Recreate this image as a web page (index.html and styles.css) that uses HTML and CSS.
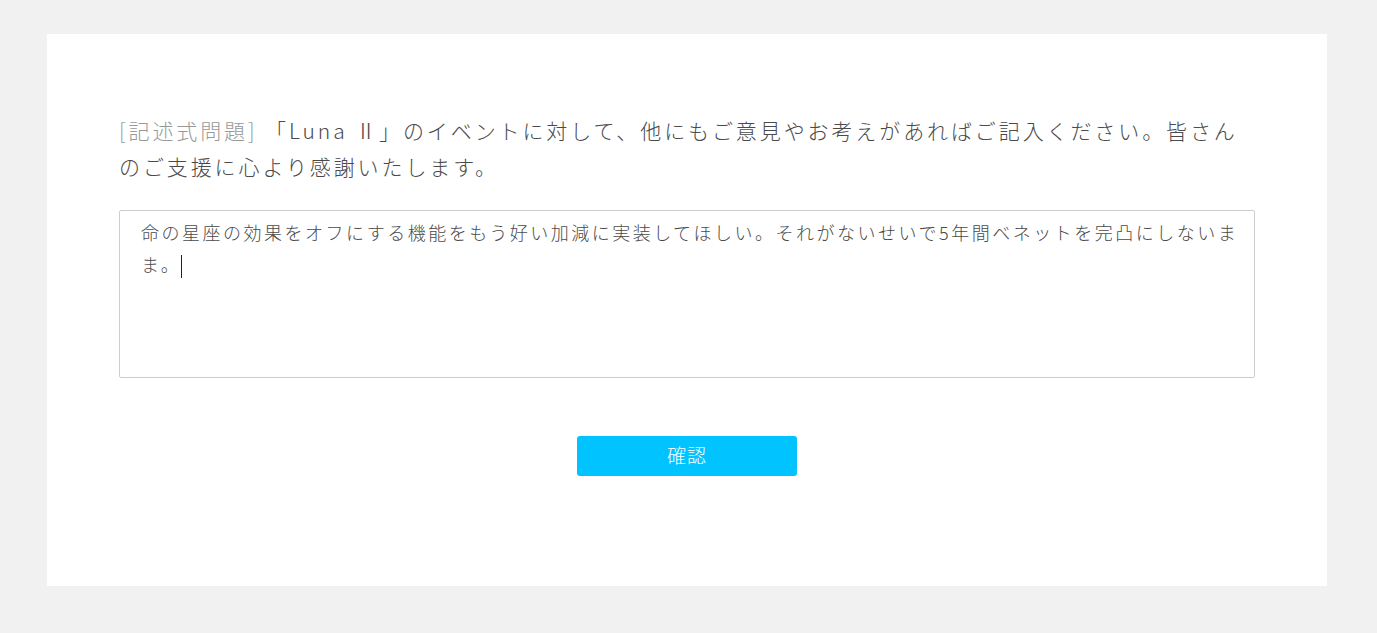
FILE: index.html
```html
<!DOCTYPE html>
<html lang="ja">
<head>
<meta charset="utf-8">
<title>記述式問題</title>
<link rel="stylesheet" href="styles.css">
</head>
<body>
<main class="panel">
  <p class="question"><span class="tag">[記述式問題]</span> 「Luna Ⅱ」のイベントに対して、他にもご意見やお考えがあればご記入ください。皆さん<br>のご支援に心より感謝いたします。</p>
  <div class="answer">命の星座の効果をオフにする機能をもう好い加減に実装してほしい。それがないせいで5年間ベネットを完凸にしないまま。<span class="caret"></span></div>
  <div class="actions"><button class="confirm" type="button">確認</button></div>
</main>
</body>
</html>
```

FILE: styles.css
```css
html, body {
  margin: 0;
  padding: 0;
}
body {
  background: #f1f1f1;
  padding: 34px 50px 47px 47px;
  font-family: "Noto Sans CJK JP", "Noto Sans", sans-serif;
  color: #555;
}
.panel {
  width: 1280px;
  height: 552px;
  box-sizing: border-box;
  background: #fff;
  padding: 78px 72px 0 72px;
}
.question {
  margin: 0;
  font-size: 21px;
  letter-spacing: 2.9px;
  line-height: 36px;
  color: #4a4a4a;
  font-weight: 300;
  white-space: nowrap;
}
.tag {
  color: #999;
}
.answer {
  margin-top: 26px;
  height: 168px;
  box-sizing: border-box;
  border: 1px solid #cdcdcd;
  border-radius: 2px;
  padding: 5px 8px 0 21px;
  font-size: 18px;
  letter-spacing: 2.5px;
  line-height: 32px;
  color: #4a4a4a;
  font-weight: 300;
}
.caret {
  display: inline-block;
  width: 1px;
  height: 23px;
  background: #222;
  vertical-align: -6px;
  margin-left: 0;
}
.actions {
  display: flex;
  justify-content: center;
  margin-top: 58px;
}
.confirm {
  width: 220px;
  height: 40px;
  border: none;
  border-radius: 3px;
  background: #00c3ff;
  color: #fff;
  font-family: inherit;
  font-size: 19px;
  letter-spacing: 1px;
  font-weight: 300;
  padding: 0 0 3px;
}
```
